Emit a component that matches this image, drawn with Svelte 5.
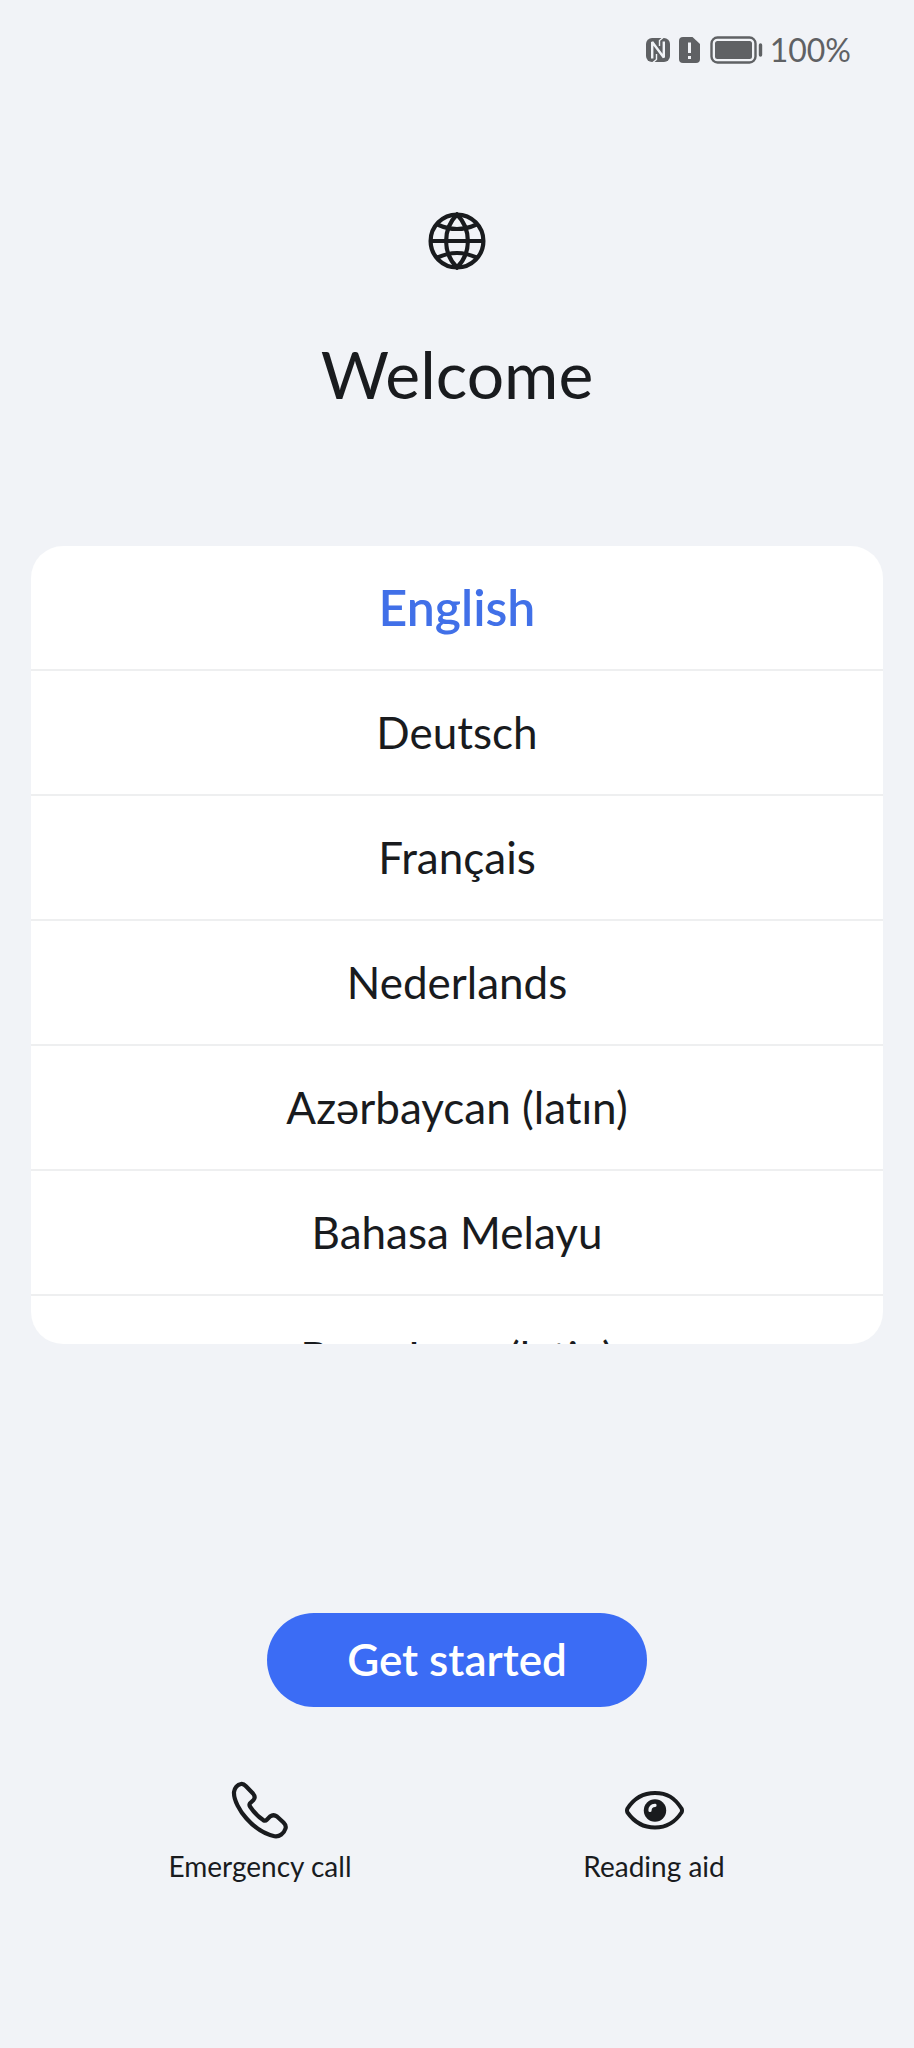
<script>
	const languages = [
		'English',
		'Deutsch',
		'Français',
		'Nederlands',
		'Azərbaycan (latın)',
		'Bahasa Melayu',
		'Basa Jawa (latin)'
	]

	let current = $state('English')
</script>

<div class="screen">
	<header class="status">
		<svg width="26" height="26" viewBox="0 0 26 26" role="img" aria-label="NFC">
			<rect x="1" y="1" width="24" height="24" rx="6" fill="#5f6164" />
			<path d="M7.2 21.5V5L18.800 20.500V4.500" fill="none" stroke="#f1f3f7" stroke-width="2.400" stroke-linejoin="bevel" />
			<path d="M7.200 26L11.500 22.500V17M18.800 0L14.500 3.500V9" fill="none" stroke="#f1f3f7" stroke-width="1.400" />
		</svg>
		<svg width="23" height="28" viewBox="0 0 23 28" role="img" aria-label="No SIM card">
			<path d="M5 1H14.5L22 8V23Q22 27 18 27H5Q1 27 1 23V5Q1 1 5 1Z" fill="#5f6164" />
			<path d="M11.5 6.5V17M11.5 20V23" fill="none" stroke="#f1f3f7" stroke-width="3" />
		</svg>
		<svg class="battery" width="53" height="28" viewBox="0 0 53 28" role="img" aria-label="Battery">
			<rect x="1.5" y="1.5" width="44" height="25" rx="6" fill="none" stroke="#5f6164" stroke-width="2.4" />
			<rect x="5" y="5" width="37" height="18" rx="2.5" fill="#5f6164" />
			<path d="M50.5 9V19" stroke="#5f6164" stroke-width="3.4" stroke-linecap="round" />
		</svg>
		<span class="percent">100%</span>
	</header>

	<div class="hero">
		<svg width="58" height="58" viewBox="0 0 58 58" fill="none" stroke="#191b1e" stroke-width="4.2" aria-hidden="true">
			<circle cx="29" cy="29" r="26.4" />
			<path d="M2.5 29H55.5" />
			<path d="M29 2.5C14.5 17 14.5 41 29 55.5C43.5 41 43.5 17 29 2.5Z" />
			<path d="M9.5 12.5Q29 21.5 48.5 12.5M9.5 45.5Q29 36.5 48.5 45.5" />
		</svg>
		<h1>Welcome</h1>
	</div>

	<ul class="languages">
		{#each languages as language}
			<li>
				<button
					class="language"
					class:selected={current === language}
					aria-pressed={current === language}
					onclick={() => current = language}>{language}
				</button>
			</li>
		{/each}
	</ul>

	<button class="start">Get started</button>

	<footer class="shortcuts">
		<button class="shortcut">
			<svg width="60" height="60" viewBox="0 0 60 60" fill="none" stroke="#191b1e" stroke-width="4.2" stroke-linejoin="round" aria-hidden="true">
				<path d="M4 12C4.5 8 7.5 4.500 11 4Q13.500 3.600 16 6.200L23 13.500Q26 17 23.500 20L19.800 23.500Q19 24.800 20 26.500C24 32.500 28.500 37 33.500 40.300Q35.300 41.300 36.800 39.700L40 36.500Q43.500 34 47 36.500L53.500 42.500Q56.500 45.500 55.500 48.500C54 53.500 49.500 57 44.500 56.200C34 54 24.500 47.500 16.500 38.500C10 31.500 3.500 20 4 12Z" />
			</svg>
			<span>Emergency call</span>
		</button>
		<button class="shortcut">
			<svg width="60" height="60" viewBox="0 0 60 60" aria-hidden="true">
				<path d="M3.5 28.5C10.5 17.5 19 13 31 13S50.5 17.5 57.5 28.5Q58.5 30.5 57.5 32.5C51 42.5 42.5 47.5 31 47.5S10.5 42.5 3.5 32.5Q2.5 30.5 3.5 28.5Z" fill="none" stroke="#191b1e" stroke-width="4" stroke-linejoin="round" />
				<circle cx="31" cy="30.5" r="11.2" fill="#191b1e" />
				<path d="M26 30.5C26 27.5 28 25.5 31 25.3" fill="none" stroke="#f1f3f7" stroke-width="3.2" stroke-linecap="round" />
			</svg>
			<span>Reading aid</span>
		</button>
	</footer>
</div>

<style>
	:global(body) {
		margin: 0;
		background: #f1f3f7;
	}

	.screen {
		display: flex;
		flex-direction: column;
		align-items: center;
		box-sizing: border-box;
		min-height: 100vh;
		color: #191b1e;
		font-family: Lato, "Noto Sans", sans-serif;
	}

	.status {
		display: flex;
		align-items: center;
		justify-content: flex-end;
		gap: 7px;
		box-sizing: border-box;
		width: 100%;
		padding: 30px 63px 0 0;
		color: #5f6164;
		font-size: 32px;
		line-height: 40px;
	}

	.battery {
		margin-left: 2px;
	}

	.hero {
		display: flex;
		flex-direction: column;
		align-items: center;
		gap: 64px;
		padding: 142px 0 132px;
	}

	h1 {
		margin: 0;
		font-size: 66px;
		font-weight: 400;
		line-height: 80px;
	}

	svg {
		display: block;
		flex: none;
	}

	button {
		padding: 0;
		border: none;
		background: none;
		color: inherit;
		font-family: inherit;
		font-variant-ligatures: none;
		cursor: pointer;
	}

	.languages {
		align-self: stretch;
		max-height: 798px;
		margin: 0 31px;
		padding: 0;
		overflow-y: auto;
		scrollbar-width: none;
		border-radius: 32px;
		background: #fff;
		list-style: none;
	}

	li {
		border-bottom: 2px solid #eeeff0;
	}

	.language {
		display: block;
		width: 100%;
		height: 123px;
		padding-bottom: 2px;
		font-size: 44px;
	}

	.selected {
		color: #4170e8;
		font-size: 50px;
		font-weight: 600;
	}

	.start {
		width: 380px;
		height: 94px;
		margin-top: 269px;
		padding-bottom: 2px;
		border-radius: 47px;
		background: #3b6cf5;
		color: #fff;
		font-size: 44px;
		font-weight: 600;
	}

	.shortcuts {
		display: grid;
		grid-template-columns: 1fr 1fr;
		align-self: stretch;
		padding: 73px 63px 64px;
	}

	.shortcut {
		display: flex;
		flex-direction: column;
		align-items: center;
		gap: 10px;
		font-size: 28px;
		line-height: 32px;
	}
</style>
